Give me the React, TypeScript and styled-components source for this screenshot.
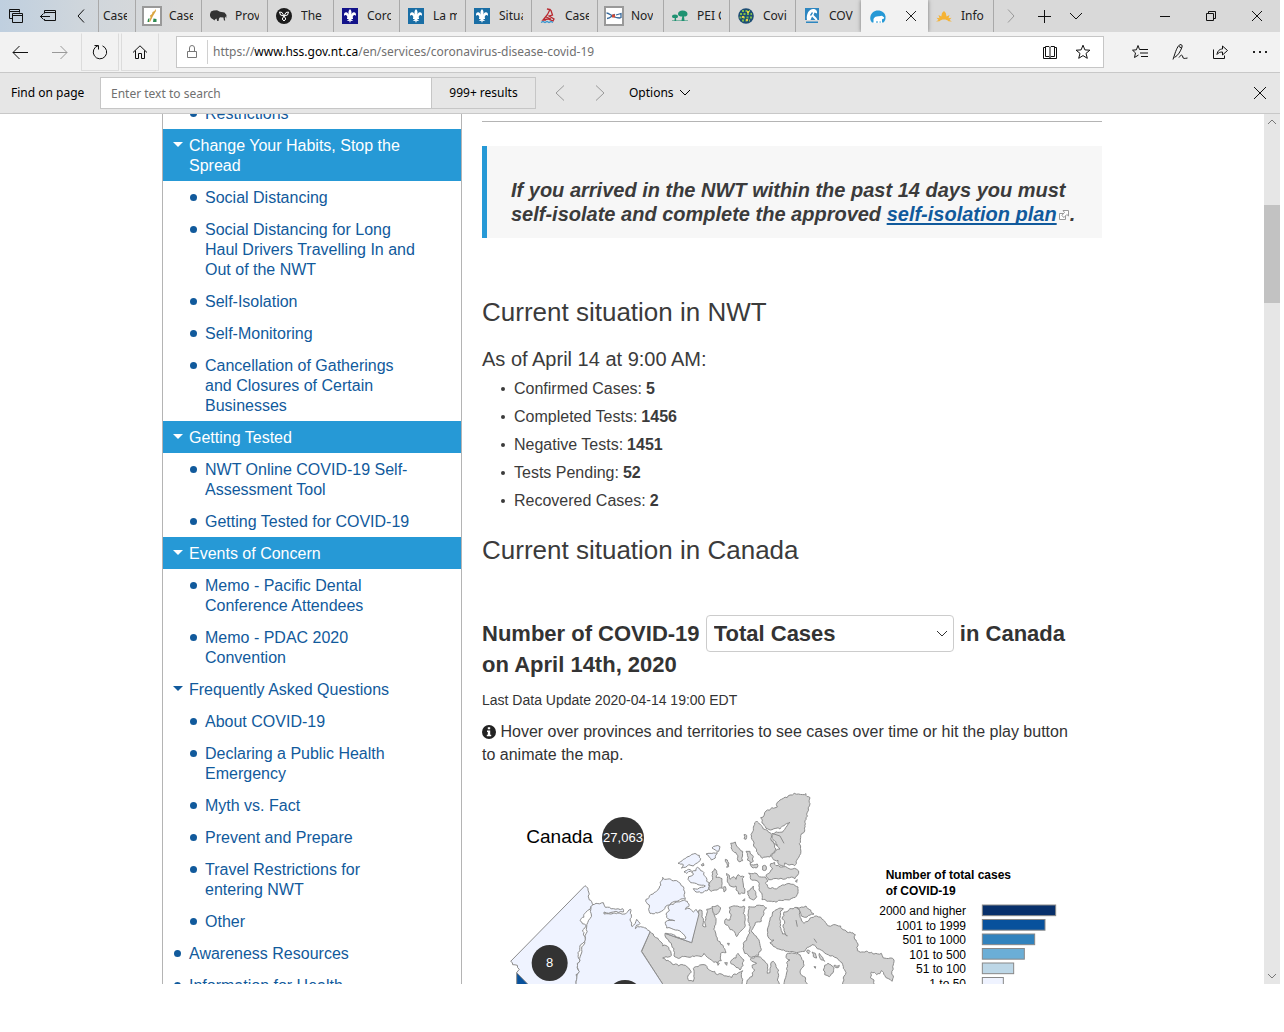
import React from "react";
import styled, { createGlobalStyle, css } from "styled-components";

const UI_FONT = `"Noto Sans", "Open Sans", sans-serif`;
const PAGE_FONT = `"Liberation Sans", Arial, sans-serif`;

const Global = createGlobalStyle`
  *, *::before, *::after { box-sizing: border-box; }
  html, body, #root { height: 100%; }
  body { margin: 0; background: #fff; font-family: ${PAGE_FONT}; }
  ul { list-style: none; margin: 0; padding: 0; }
`;

const Window = styled.div`
  height: 100%;
  padding: 0 4px 48px 0;
  display: flex;
  flex-direction: column;
  overflow: hidden;
`;

/* ---------- browser chrome ---------- */

const bareButton = css`
  border: 0;
  margin: 0;
  padding: 0;
  background: transparent;
  font: inherit;
  color: inherit;
`;

const TabStrip = styled.div`
  flex: none;
  height: 32px;
  display: flex;
  background: linear-gradient(90deg, #bfcfdf 0, #cfd6dc 80px, #d9d9d9 180px);
  font: 12px/16px ${UI_FONT};
  color: #222;
`;

const ChromeButton = styled.button<{ $w: number; $dim?: boolean }>`
  ${bareButton}
  flex: none;
  width: ${(p) => p.$w}px;
  display: flex;
  align-items: center;
  justify-content: center;
  color: ${(p) => (p.$dim ? "#999" : "#111")};
`;

const TabList = styled.div`
  display: flex;
  border-left: 1px solid #a9a9a9;
`;

const Tab = styled.button<{ $active?: boolean; $first?: boolean }>`
  ${bareButton}
  width: ${(p) => (p.$first ? 37 : p.$active ? 67 : 66)}px;
  padding: 0 8px 0 ${(p) => (p.$first ? 4 : 6)}px;
  display: flex;
  align-items: center;
  justify-content: ${(p) => (p.$active ? "space-between" : "flex-start")};
  gap: 7px;
  border-right: 1px solid #a9a9a9;
  background: ${(p) => (p.$active ? "#f2f2f2" : "transparent")};
  ${(p) => p.$active && "margin-left: -1px; padding: 0 9px; border-right: 0; box-shadow: 0 0 4px #777;"}
`;

const TabIcon = styled.span`
  flex: none;
  width: 20px;
  height: 20px;
  display: flex;
  align-items: center;
  justify-content: center;
`;

const TabTitle = styled.span`
  min-width: 0;
  overflow: hidden;
  white-space: nowrap;
`;

const Spacer = styled.div`
  flex: 1;
`;

const NavBar = styled.div`
  flex: none;
  height: 41px;
  display: flex;
  background: #f2f2f2;
  border-bottom: 1px solid #c8c8c8;
`;

const RaisedButton = styled(ChromeButton)`
  height: 38px;
  margin: 1px 1px 0;
  border: 1px solid #dcdcdc;
  border-top-color: #f2f2f2;
`;

const AddressBar = styled.div`
  flex: 1;
  min-width: 0;
  margin: 4px 16px;
  display: flex;
  align-items: center;
  border: 1px solid #c6c6c6;
  background: #fff;
  font: 12px/20px ${UI_FONT};
`;

const Lock = styled.span`
  width: 31px;
  height: 24px;
  display: flex;
  align-items: center;
  justify-content: center;
  border-right: 1px solid #d0d0d0;
  color: #777;
`;

const Url = styled.span`
  flex: 1;
  min-width: 0;
  padding-left: 5px;
  overflow: hidden;
  white-space: nowrap;
  color: #707070;
  b {
    font-weight: 400;
    color: #000;
  }
`;

const FindBar = styled.form`
  flex: none;
  height: 41px;
  display: flex;
  align-items: center;
  background: #e6e6e6;
  border-bottom: 1px solid #c8c8c8;
  font: 12px/20px ${UI_FONT};
  color: #000;
`;

const FindLabel = styled.label`
  width: 100px;
  padding-left: 11px;
  white-space: nowrap;
`;

const FindInput = styled.input`
  width: 332px;
  height: 32px;
  padding: 0 10px;
  border: 1px solid #c6c6c6;
  border-radius: 0;
  background: #fff;
  font: inherit;
  &::placeholder {
    color: #707070;
    opacity: 1;
  }
`;

const FindCount = styled.output`
  width: 104px;
  height: 32px;
  display: flex;
  align-items: center;
  justify-content: center;
  border: 1px solid #c6c6c6;
  border-left: 0;
  margin-right: 4px;
`;

const OptionsButton = styled.button`
  ${bareButton}
  display: flex;
  align-items: center;
  gap: 5px;
  margin-left: 9px;
`;

/* ---------- page ---------- */

const Viewport = styled.div`
  flex: 1;
  min-height: 0;
  display: flex;
`;

const Page = styled.div`
  flex: 1;
  min-width: 0;
  overflow: hidden;
`;

const Columns = styled.div`
  max-width: 940px;
  margin: 0 auto;
  display: flex;
  gap: 20px;
`;

const SideNav = styled.nav`
  flex: none;
  width: 300px;
  margin-top: -17px;
  border: 1px solid #b4b4b4;
  border-width: 0 1px;
  font-size: 16px;
  line-height: 20px;
`;

const NavItem = styled.li<{ $level: number; $on?: boolean }>`
  display: flex;
  padding: 7px 44px 5px ${(p) => (p.$level === 2 ? 26 : 10)}px;
  background: ${(p) => (p.$on ? "#2699d6" : "transparent")};
  color: ${(p) => (p.$on ? "#fff" : "#115a9c")};
`;

const Marker = styled.span`
  flex: none;
  width: 16px;
  height: 18px;
  display: flex;
  align-items: center;
`;

const Dot = styled.i`
  width: 7px;
  height: 7px;
  margin-left: 1px;
  border-radius: 50%;
  background: currentColor;
`;

const Caret = styled.i`
  border: 5px solid transparent;
  border-top-color: currentColor;
  border-bottom: 0;
  margin-bottom: 2px;
`;

const NavLink = styled.a`
  color: inherit;
  text-decoration: none;
`;

const Main = styled.main`
  flex: 1;
  min-width: 0;
  padding-top: 7px;
  color: #3b3b3b;
`;

const Rule = styled.hr`
  margin: 0 0 24px;
  border: 0;
  border-top: 1px solid #b4b4b4;
`;

const Notice = styled.blockquote`
  margin: 0 0 56px;
  padding: 32px 20px 12px 24px;
  border-left: 5px solid #2699d6;
  background: #f7f7f7;
  font: italic bold 20px/24px ${PAGE_FONT};
  a {
    color: #115a9c;
    text-decoration: underline 2px;
    text-underline-offset: 2px;
    text-decoration-skip-ink: none;
  }
  svg {
    margin: 0 1px 0 2px;
    vertical-align: 1px;
  }
`;

const H2 = styled.h2`
  margin: 0;
  font-size: 26px;
  line-height: 36px;
  font-weight: 400;
`;

const H3 = styled.h3`
  margin: 16px 0 0;
  font-size: 20px;
  line-height: 26px;
  font-weight: 400;
`;

const Stats = styled.ul`
  margin: 3px 0 17px;
  font-size: 16px;
  line-height: 28px;
`;

const Stat = styled.li`
  display: flex;
  align-items: center;
  gap: 4px;
  padding-left: 19px;
  &::before {
    content: "";
    width: 4px;
    height: 4px;
    margin-right: 5px;
    border-radius: 50%;
    background: #3b3b3b;
  }
`;

const MapTitle = styled.h4`
  margin: 50px 0 0;
  padding-right: 20px;
  font-size: 22px;
  line-height: 31px;
  font-weight: 700;
  color: #333;
`;

const SelectWrap = styled.span`
  position: relative;
  display: inline-block;
  margin: -3px 0;
  svg {
    position: absolute;
    right: 6px;
    top: 13px;
    pointer-events: none;
  }
`;

const CaseSelect = styled.select`
  width: 248px;
  height: 37px;
  padding: 0 7px;
  appearance: none;
  border: 1px solid #ccc;
  border-radius: 4px;
  background: #fff;
  color: #333;
  font: bold 22px/31px ${PAGE_FONT};
`;

const Updated = styled.p`
  margin: 10px 0;
  font-size: 14px;
  line-height: 20px;
  color: #333;
`;

const Hint = styled.p`
  margin: 0;
  padding-right: 20px;
  font-size: 16px;
  line-height: 23px;
  color: #333;
  svg {
    vertical-align: -2px;
  }
`;

const MapSvg = styled.svg`
  display: block;
  width: 100%;
  margin-top: 14px;
  font-family: ${PAGE_FONT};
`;

const ScrollBar = styled.div`
  flex: none;
  width: 16px;
  display: flex;
  flex-direction: column;
  align-items: center;
  background: #e6e6e6;
  color: #777;
`;

const Thumb = styled.div`
  width: 16px;
  height: 98px;
  margin-top: 75px;
  background: #c2c2c2;
`;

const ScrollArrow = styled.button`
  ${bareButton}
  height: 16px;
  display: flex;
  align-items: center;
`;

/* ---------- icons ---------- */

type LineProps = { d: string; size?: number; w?: number };
const Line = ({ d, size = 16, w = 1 }: LineProps) => (
  <svg width={size} height={size} viewBox={`0 0 ${size} ${size}`} fill="none" stroke="currentColor" strokeWidth={w} aria-hidden="true">
    <path d={d} />
  </svg>
);

const icons = {
  tabsAside: "M4.5 10.500h-3v-9h10v3M1.500 3.500h10M4.500 5.500h10v9h-10zM4.500 7.500h10",
  setAside: "M4.500 5.500V2.500h11v10h-11V11M4.500 4.500h11M0 8.500h10M3.500 5.500L.500 8.500l3 3",
  left: "M11 1.500L5 8l6 6.500",
  right: "M5 1.500L11 8l-6 6.500",
  prev: "M12 .500L4 8l8 7.500",
  next: "M4 .500L12 8l-8 7.500",
  down: "M2 5l6 6 6-6",
  plus: "M8.500 2v13M2 8.500h13",
  minimise: "M3 8.500h10",
  restore: "M3.500 5.500h7v7h-7zM5.500 5.500v-2h7v7h-2",
  close: "M3 3l10 10M13 3L3 13",
  back: "M1 8.500h15M7.500 2L1 8.500 7.500 15",
  forward: "M0 8.500h15M8.500 2L15 8.500 8.500 15",
  refresh: "M6 1.700A6.700 6.700 0 1 0 10.500 1.900M2.500 1.500H6.500V5.500",
  home: "M1 8.500L8 1.800l7 6.700M3.500 6.500v8h3v-5h3v5h3v-8",
  lock: "M3.500 7.500h9v6h-9zM5.500 7.500V4a2.500 2.500 0 0 1 5 0v3.500",
  book: "M8 3.500v10M8 3.500L7 2.500H3.500v10H7l1 1 1-1h3.500v-10H9zM3.500 3.500h-2v11h13v-11h-2",
  star: "M8 1.200l1.900 4.700 5 .300-3.900 3.200 1.300 4.900L8 11.600l-4.300 2.700L5 9.400 1.100 6.200l5-.300z",
  favourites: "M10 5.500H7.500L6 1.500 4.400 5.800.500 6.200l3 2.700-1 4.600L6.500 11M9 5.500h7M8 9h8M9 12.500h7",
  pen: "M1 15.500l1.500-4.500C4 6 6 1.500 8 .700c1.500-.500 2.500.600 2 2.300C8.500 7.500 6 11.500 2.500 13.500M7 2.500l2.500 1.500M7 13.500c2-3 3.500-3 3.800-.500.200 2 2 1.500 4.700 1",
  share: "M1.500 5.500v9h11v-3M5 10.500C5.500 6.500 8 5 10.500 5V2l5 4.500-5 4.500V8C8 8 6.500 8.500 5 10.500z",
};

const FleurDeLis = ({ bg }: { bg: string }) => (
  <svg width="16" height="16" viewBox="0 0 16 16" aria-hidden="true">
    <path fill={bg} d="M0 0h16v16H0z" />
    <path fill="#fff" d="M8 1c1.800 2 2 3.500.8 7 .8-3 2-4 3.400-3.700C14 4.700 14.500 6.500 13.500 8c-.3-1-1.200-1.300-2-.6-.7.700-.8 1.300-1 2.100H11v1.400H9.300c.3 1 1 1.500 2 1.600-1 .8-1.800.6-2.400 0L8 15l-.9-2.500c-.6.600-1.400.8-2.400 0 1-.1 1.700-.6 2-1.600H5V9.500h.5c-.2-.8-.3-1.400-1-2.100-.8-.7-1.700-.4-2 .6C1.500 6.500 2 4.700 3.800 4.300 5.200 4 6.400 5 7.200 8 6 4.500 6.200 3 8 1z" />
  </svg>
);

const Alberta = () => (
  <svg width="20" height="20" viewBox="0 0 20 20" aria-hidden="true">
    <path fill="#fff" stroke="#999" strokeWidth="2" d="M1 1h18v18H1z" />
    <path fill="#dba640" d="M13.500 3l.5 2-3 5-3 6-1-.5 1.500-4-.5-2 2-1.500.5-2 2-1z" />
    <path fill="#2f8a53" d="M6 13l1.500-1L7 16H5.500zM11.500 12.500l3 .5V16h-3.500z" />
  </svg>
);

const Bison = () => (
  <svg width="17" height="12" viewBox="0 0 17 12" aria-hidden="true">
    <path fill="#333" d="M0 4l1-2.500L3.500.500 7 .300l3 1.500 4.500.700L16.500 5l-.3 3.500-.7-2-.7 1.500.4 2.500h-1.200l-.6-3-3.400-.2-1 1.200L8.500 11H7.200L6.500 8.500 5 9.500l-.5 1-1.200-1L1 8 0 6z" />
  </svg>
);

const Trillium = () => (
  <svg width="16" height="16" viewBox="0 0 16 16" aria-hidden="true">
    <circle cx="8" cy="8" r="8" fill="#1c1c1c" />
    <path fill="none" stroke="#fff" d="M8 8L4.500 7 3.500 4 6 4.500 8 8l2-3.500 2.500-.5-1 3zM8 8l-1.800 3L8 13l1.800-2z" />
  </svg>
);

const Ship = () => (
  <svg width="16" height="16" viewBox="0 0 16 16" aria-hidden="true">
    <path fill="none" stroke="#b8292f" strokeWidth="1.300" d="M7 1l3 .5-2.500 5L3 12l5-1 5 2 1-2-5-3 3.500-1L11 2.500zM6 9l5 2M3 12h3" />
    <path fill="none" stroke="#3594cf" strokeWidth="1.300" d="M1 14.500l2-1 2 1 2-1 2 1 2-1 2 1" />
  </svg>
);

const NovaScotia = () => (
  <svg width="20" height="20" viewBox="0 0 20 20" aria-hidden="true">
    <path fill="#fff" stroke="#999" strokeWidth="2" d="M1 1h18v18H1z" />
    <path fill="none" stroke="#37699c" strokeWidth="1.300" d="M2.500 7c4 0 5 5 14 5M3 12.500c4 0 5-3.500 8-4M12 9l5-1.500V12" />
    <path fill="#d04a35" d="M8 8.500h3v3H8z" />
  </svg>
);

const PeiTrees = () => (
  <svg width="16" height="12" viewBox="0 0 16 12" aria-hidden="true">
    <path fill="#1f9271" d="M10.500.500c3 0 5 1.500 5 3.500s-1.500 2.500-3.500 2.500l.5 4h-3l.8-4C8 6.500 6 6 6 4S8 .500 10.500.500zM3 4.500c2 0 3 .8 3 2S5 8 4 8l.2 2.500H2.500L2.700 8C1 8 0 7.600 0 6.500s1-2 3-2zM0 10.500h16V11H0z" />
  </svg>
);

const Globe = () => (
  <svg width="16" height="16" viewBox="0 0 16 16" aria-hidden="true">
    <circle cx="8" cy="8" r="7.800" fill="#1d4d74" />
    <path fill="none" stroke="#7dbb4b" strokeWidth="2" strokeDasharray="2 1.500" d="M2 6h12M1.500 9.500h13M4 12.500h8M4 3h8" />
    <path fill="#e8c94a" d="M9 3h2v2H9zM4 8h2v2H4zM8 11h2v2H8z" />
  </svg>
);

const Wave = () => (
  <svg width="14" height="16" viewBox="0 0 14 16" aria-hidden="true">
    <path fill="#2d86c0" d="M0 0h14v12H0z" />
    <path fill="#fff" d="M2 12C1 6 4 1 8 1c3 0 4.500 2 4 4.500L9.500 4.500 8.500 7l3 3 1 2h-2L7 8.500 5.500 12z" />
    <path fill="#2d86c0" d="M5 7l2-3 1 1-2 3zM1 13.500h12V15H1z" />
  </svg>
);

const PolarBear = () => (
  <svg width="16" height="13" viewBox="0 0 16 13" aria-hidden="true">
    <path fill="#2699d6" d="M2 12.500C.500 11 0 9 .3 7 1 3 4 .500 8 .500s7 2.500 7.500 6c.3 2.500-.5 4.500-2 6z" />
    <path fill="#fff" d="M3.500 13V9C4.500 6.500 7 6 9 6.200l3-.4 2.200 1.700-.4 1.200-1.600.3-.2 1.500V13h-1.200v-1.500H9.500V13H8v-1.500H6V13H4.800" />
  </svg>
);

const Sun = () => (
  <svg width="16" height="12" viewBox="0 0 16 12" aria-hidden="true">
    <path fill="#f5b335" d="M0 11.500L2.500 10 .5 7.800l3 .4L2.500 5l2.800 1.500L6 3l2-2 1.800 2 .7 3.500L13.500 5l-1 3.200 3-.4L13.500 10l2.500 1.500-3.500-.2C11 8.800 5 8.800 3.500 11.300z" />
  </svg>
);

const External = () => (
  <svg width="10" height="10" viewBox="0 0 10 10" fill="#fff" stroke="#999" aria-hidden="true">
    <path d="M.5 3.500h6v6h-6z" />
    <path d="M4 .500h5.500V6L7.800 4.500 5 7.500 2.800 5.500 5.500 2.500z" />
  </svg>
);

const Info = () => (
  <svg width="14" height="14" viewBox="0 0 14 14" aria-hidden="true">
    <circle cx="7" cy="7" r="7" fill="#222" />
    <path fill="#fff" d="M5.800 2.200h2.400v2H5.800zM5 5.500h3.200v4.200H9.200v1.500H4.800V9.700h1V7H5z" />
  </svg>
);

/* ---------- map ---------- */

/* Turns key points into a ragged coastline. A point written with "=" is
   reached by a straight surveyed border instead. */
function coast(points: string, rough = 0.22): string {
  const pts = points.trim().split(/\s+/).map((t) => {
    const straight = t[0] === "=";
    const [x, y] = t.replace("=", "").split(",").map(Number);
    return { x, y, straight };
  });
  const out: string[] = [`M${pts[0].x} ${pts[0].y}`];
  const walk = (ax: number, ay: number, bx: number, by: number) => {
    const len = Math.hypot(bx - ax, by - ay);
    if (len < 8) {
      out.push(`L${bx.toFixed(1)} ${by.toFixed(1)}`);
      return;
    }
    const seed = Math.sin(ax * 12.9 + ay * 78.2 + bx * 3.7 + by * 9.1) * 43758.5;
    const k = (seed - Math.floor(seed) - 0.5) * 2 * Math.min(len * rough, 4);
    const mx = (ax + bx) / 2 - ((by - ay) / len) * k;
    const my = (ay + by) / 2 + ((bx - ax) / len) * k;
    walk(ax, ay, mx, my);
    walk(mx, my, bx, by);
  };
  for (let i = 1; i <= pts.length; i++) {
    const a = pts[i - 1];
    const b = pts[i % pts.length];
    if (b.straight) out.push(`L${b.x} ${b.y}`);
    else walk(a.x, a.y, b.x, b.y);
  }
  return out.join("") + "Z";
}

const GREY = "#d3d3d3";
const PALE = "#eff3ff";

type Land = { fill: string; at?: [number, number]; pts: string };

const lands: Land[] = [
  /* mainland Nunavut */
  { fill: GREY, at: [450, 180], pts: "60,275 76,292 98,318 116,322 122,334 124,346 108,350 98,354 108,362 126,372 146,378 166,376 176,384 184,396 176,404 176,422 190,424 192,404 190,386 204,380 216,374 228,376 238,390 254,394 262,404 290,408 306,412 312,402 326,398 338,392 334,404 338,418 336,432 =336,460 =98,460 =98,432 =35,334 =60,275" },
  { fill: GREY, at: [630, 0], pts: "172,630 172,600 186,590 194,570 186,556 200,550 180,538 204,530 216,536 228,548 234,570 232,580 240,578 242,552 250,544 258,560 266,570 266,586 262,600 268,612 =268,630" },
  { fill: GREY, at: [630, 0], pts: "286,630 284,600 292,572 290,548 300,540 288,532 292,520 324,520 334,532 342,556 334,566 330,576 346,592 352,612 =352,630" },
  /* Victoria Island */
  { fill: GREY, at: [450, 180], pts: "105,280 =185,308 =207,210 216,212 220,236 218,258 228,260 230,222 230,208 244,204 256,214 252,224 258,240 256,276 262,300 284,326 288,338 272,340 274,362 262,368 244,360 232,352 222,340 214,350 180,352 150,354 132,348 132,326 118,306" },
  { fill: PALE, at: [450, 180], pts: "118,196 140,186 172,184 176,200 166,208 180,206 190,216 198,208 =207,222 =185,308 =105,280 130,284 168,294 160,282 136,270 110,264 106,246 134,242 110,232 108,222 118,212" },
  { fill: PALE, at: [450, 180], pts: "98,112 104,118 140,122 160,140 166,178 148,181 134,184 112,196 94,214 60,220 58,195 48,178 62,164 88,144" },
  /* northwestern islands */
  { fill: PALE, at: [450, 180], pts: "144,70 160,58 174,50 190,42 208,46 212,56 206,66 190,78 176,74 166,82 154,84 160,74" },
  { fill: PALE, at: [450, 180], pts: "176,110 190,104 184,96 198,92 202,82 212,92 222,98 228,112 230,124 238,128 234,150 218,158 198,156 190,146 214,142 226,138 204,134 182,128 174,118" },
  { fill: PALE, at: [450, 180], pts: "162,96 176,88 184,92 170,100" },
  { fill: PALE, at: [450, 180], pts: "228,42 240,40 262,38 256,54 244,60 238,52" },
  { fill: PALE, at: [450, 180], pts: "246,24 256,18 270,20 266,34 256,30" },
  { fill: GREY, at: [450, 180], pts: "214,74 220,70 222,76 216,78" },
  { fill: GREY, at: [450, 180], pts: "242,124 248,118 246,96 254,86 260,94 258,112 276,116 276,144 262,150 244,154 236,144" },
  { fill: GREY, at: [630, 0], pts: "98,324 106,320 108,330 102,336" },
  { fill: GREY, at: [630, 0], pts: "106,238 112,240 116,260 110,262" },
  { fill: GREY, at: [630, 0], pts: "122,190 136,186 140,198 150,208 158,214 158,242 150,246 142,236 138,218 126,208" },
  { fill: GREY, at: [630, 0], pts: "168,214 180,214 190,230 190,244 182,250 172,240" },
  { fill: GREY, at: [630, 0], pts: "180,250 202,252 202,262 186,262" },
  { fill: GREY, at: [630, 0], pts: "162,164 170,166 168,178 162,176" },
  { fill: GREY, at: [630, 0], pts: "218,258 228,258 228,270 218,270" },
  { fill: GREY, at: [630, 0], pts: "110,280 118,286 120,298 132,290 138,298 144,284 162,290 164,340 146,342 138,330 138,318 126,320 116,310 112,300" },
  { fill: GREY, at: [630, 0], pts: "172,334 182,326 190,318 196,334 200,350 190,360 178,354" },
  { fill: GREY, at: [630, 0], pts: "158,362 164,356 164,362" },
  { fill: GREY, at: [630, 0], pts: "112,490 118,490 116,496" },
  { fill: GREY, at: [630, 0], pts: "80,548 88,550 84,556" },
  { fill: GREY, at: [630, 0], pts: "104,548 112,548 110,556" },
  /* Ellesmere and Axel Heiberg */
  { fill: GREY, at: [810, 15], pts: "32,98 48,78 66,68 82,66 82,52 100,40 120,30 146,27 168,26 180,38 180,56 172,82 168,104 164,138 152,158 148,176 152,206 140,226 134,242 112,238 104,234 100,244 88,240 84,226 68,220 66,208 78,196 90,192 78,176 66,160 70,146 88,142 104,134 120,112 102,122 90,132 66,134 48,130 36,114" },
  { fill: GREY, at: [810, 15], pts: "20,108 32,120 40,132 62,144 62,160 74,180 78,192 68,204 60,216 36,220 24,208 18,190 10,180 4,158 8,140 12,122" },
  { fill: GREY, at: [810, 15], pts: "62,236 74,232 78,242 90,246 112,248 134,250 146,258 142,272 134,282 112,278 86,282 56,284 48,274 60,262 68,252" },
  { fill: GREY, at: [810, 15], pts: "-4,264 14,264 24,272 46,276 54,288 46,294 54,308 80,312 104,300 130,298 144,306 144,324 130,338 104,344 68,350 36,344 30,320 28,296 18,286 2,282" },
  { fill: GREY, at: [810, 15], pts: "136,288 142,284 140,292" },
  /* Prince of Wales, Somerset, Boothia */
  { fill: GREY, at: [630, 0], pts: "118,382 136,378 162,378 160,400 164,426 160,446 146,460 140,470 130,452 116,440 104,426 108,416 120,420 124,404 118,396" },
  { fill: GREY, at: [630, 0], pts: "66,380 82,376 92,384 86,398 76,404 68,392" },
  { fill: GREY, at: [630, 0], pts: "176,380 200,376 230,384 222,400 214,424 196,428 184,452 194,466 208,484 214,508 206,526 184,532 164,520 160,490 174,468 178,430" },
  { fill: GREY, at: [630, 0], pts: "122,544 138,534 144,520 152,530 162,540 160,556 150,570 138,562 124,552" },
  /* Baffin Island */
  { fill: GREY, at: [630, 0], pts: "280,386 262,388 248,396 240,420 232,450 238,476 252,480 240,488 252,500 270,508 292,514 320,518 344,514 352,502 366,494 378,500 400,514 420,528 446,540 460,560 468,578 462,600 458,630 =556,630 552,600 540,592 544,576 560,584 574,572 584,586 606,604 610,588 608,560 612,540 600,534 580,534 574,520 552,522 520,516 502,512 504,492 494,478 496,464 480,456 464,450 452,438 430,434 412,436 400,420 380,408 370,412 354,424 342,430 334,420 328,404 330,390 318,382 300,386 282,396 276,416 284,430 282,452 292,468 278,462 270,440 270,420 272,402" },
  { fill: GREY, at: [630, 0], pts: "320,382 348,378 362,390 372,402 356,406 344,412 334,408 330,394" },
  { fill: GREY, at: [630, 0], pts: "404,556 414,550 430,560 430,576 418,590 404,584 400,570" },
  { fill: GREY, at: [630, 0], pts: "352,510 360,514 356,522 350,516" },
  { fill: GREY, at: [630, 0], pts: "366,516 376,520 380,534 370,530" },
  { fill: GREY, at: [630, 0], pts: "388,520 398,532 404,544 394,540" },
  { fill: GREY, at: [630, 0], pts: "432,556 448,556 446,562 436,562" },
  { fill: GREY, at: [630, 0], pts: "372,560 377,560 376,565" },
  /* NWT mainland, Yukon, British Columbia */
  { fill: PALE, pts: "338,374 348,370 370,368 376,382 400,386 428,386 430,396 400,396 372,396 372,402 400,400 436,402 452,388 454,404 450,420 456,440 470,418 480,430 466,446 482,440 498,444 510,456 =484,514 =548,612 =548,640 =282,640 =290,590" },
  { fill: PALE, pts: "=315,317 326,336 328,360 338,374 300,422 318,436 308,450 314,484 302,494 300,512 294,518 300,540 292,550 298,574 288,584 288,612 =286,640 =170,640 =110,578 118,568 112,556 98,554 92,544 =315,317" },
];

/* fjords cut into the high Arctic islands */
const fjords = "M872 180L886 192 894 196M876 160L900 168 912 190M948 420L952 440M1002 476L1010 488";

const westCoast = "M110 578V640H180L150 612Z";

const badges = [
  { x: 429, y: 174, r: 63, label: "27,063" },
  { x: 209, y: 549, r: 54, label: "8" },
  { x: 435, y: 654, r: 54, label: "5" },
];

const legend = [
  { label: "2000 and higher", w: 222, fill: "#08306b" },
  { label: "1001 to 1999", w: 190, fill: "#08519c" },
  { label: "501 to 1000", w: 159, fill: "#3182bd" },
  { label: "101 to 500", w: 128, fill: "#6baed6" },
  { label: "51 to 100", w: 96, fill: "#bdd7e7" },
  { label: "1 to 50", w: 65, fill: "#eff3ff" },
];

const CanadaMap = () => (
  <MapSvg viewBox="6 0 1860 1500" role="img" aria-label="Map of COVID-19 cases in Canada">
    <g stroke="#8c8c8c" strokeWidth="3" strokeLinejoin="round">
      <path d={westCoast} fill="#08519c" />
      {lands.map((l, i) => (
        <path key={i} fill={l.fill} d={coast(l.pts)} transform={l.at && `translate(${l.at[0]} ${l.at[1]})`} />
      ))}
      <path fill="none" d={fjords} />
    </g>
    <text x="139" y="189" fontSize="57">Canada</text>
    {badges.map((b) => (
      <g key={b.label}>
        <circle cx={b.x} cy={b.y} r={b.r} fill="#333" />
        <text x={b.x} y={b.y + 13} fontSize="39" fill="#fff" textAnchor="middle">{b.label}</text>
      </g>
    ))}
    <g fontSize="36" fontWeight="700">
      <text x="1217" y="297">Number of total cases</text>
      <text x="1217" y="345">of COVID-19</text>
    </g>
    {legend.map((row, i) => (
      <g key={row.label}>
        <text x="1458" y={405 + i * 43.5} fontSize="36" textAnchor="end">{row.label}</text>
        <rect x="1507" y={375 + i * 43.5} width={row.w - 2} height="32" fill={row.fill} stroke="#888" strokeWidth="3" />
      </g>
    ))}
  </MapSvg>
);

/* ---------- data ---------- */

const tabs = [
  { title: "Case", icon: <Alberta /> },
  { title: "Prov", icon: <Bison /> },
  { title: "The", icon: <Trillium /> },
  { title: "Coro", icon: <FleurDeLis bg="#13138a" /> },
  { title: "La m", icon: <FleurDeLis bg="#1a6ea5" /> },
  { title: "Situa", icon: <FleurDeLis bg="#1a6ea5" /> },
  { title: "Case", icon: <Ship /> },
  { title: "Nov", icon: <NovaScotia /> },
  { title: "PEI C", icon: <PeiTrees /> },
  { title: "Covi", icon: <Globe /> },
  { title: "COV", icon: <Wave /> },
];

type Item = { level: 1 | 2; text: string; on?: boolean; open?: boolean };
const menu: Item[] = [
  { level: 2, text: "Restrictions" },
  { level: 1, text: "Change Your Habits, Stop the Spread", on: true, open: true },
  { level: 2, text: "Social Distancing" },
  { level: 2, text: "Social Distancing for Long Haul Drivers Travelling In and Out of the NWT" },
  { level: 2, text: "Self-Isolation" },
  { level: 2, text: "Self-Monitoring" },
  { level: 2, text: "Cancellation of Gatherings and Closures of Certain Businesses" },
  { level: 1, text: "Getting Tested", on: true, open: true },
  { level: 2, text: "NWT Online COVID-19 Self-Assessment Tool" },
  { level: 2, text: "Getting Tested for COVID-19" },
  { level: 1, text: "Events of Concern", on: true, open: true },
  { level: 2, text: "Memo - Pacific Dental Conference Attendees" },
  { level: 2, text: "Memo - PDAC 2020 Convention" },
  { level: 1, text: "Frequently Asked Questions", open: true },
  { level: 2, text: "About COVID-19" },
  { level: 2, text: "Declaring a Public Health Emergency" },
  { level: 2, text: "Myth vs. Fact" },
  { level: 2, text: "Prevent and Prepare" },
  { level: 2, text: "Travel Restrictions for entering NWT" },
  { level: 2, text: "Other" },
  { level: 1, text: "Awareness Resources" },
  { level: 1, text: "Information for Health" },
];

const stats = [
  ["Confirmed Cases:", "5"],
  ["Completed Tests:", "1456"],
  ["Negative Tests:", "1451"],
  ["Tests Pending:", "52"],
  ["Recovered Cases:", "2"],
];

export default function App() {
  return (
    <Window>
      <Global />
      <TabStrip>
        <ChromeButton $w={32} aria-label="Tabs set aside"><Line d={icons.tabsAside} /></ChromeButton>
        <ChromeButton $w={32} aria-label="Set tabs aside"><Line d={icons.setAside} /></ChromeButton>
        <ChromeButton $w={34} aria-label="Scroll tabs left"><Line d={icons.left} /></ChromeButton>
        <TabList>
          <Tab $first><TabTitle>Case</TabTitle></Tab>
          {tabs.map((t, i) => (
            <Tab key={i}>
              <TabIcon>{t.icon}</TabIcon>
              <TabTitle>{t.title}</TabTitle>
            </Tab>
          ))}
          <Tab $active aria-label="Current tab">
            <PolarBear />
            <Line d={icons.close} />
          </Tab>
          <Tab>
            <TabIcon><Sun /></TabIcon>
            <TabTitle>Info</TabTitle>
          </Tab>
        </TabList>
        <ChromeButton $w={34} $dim aria-label="Scroll tabs right"><Line d={icons.right} /></ChromeButton>
        <ChromeButton $w={32} aria-label="New tab"><Line d={icons.plus} /></ChromeButton>
        <ChromeButton $w={32} aria-label="Tab previews"><Line d={icons.down} /></ChromeButton>
        <Spacer />
        <ChromeButton $w={46} aria-label="Minimise"><Line d={icons.minimise} /></ChromeButton>
        <ChromeButton $w={46} aria-label="Restore"><Line d={icons.restore} /></ChromeButton>
        <ChromeButton $w={46} aria-label="Close window"><Line d={icons.close} /></ChromeButton>
      </TabStrip>

      <NavBar>
        <ChromeButton $w={40} aria-label="Back"><Line d={icons.back} /></ChromeButton>
        <ChromeButton $w={40} $dim aria-label="Forward"><Line d={icons.forward} /></ChromeButton>
        <RaisedButton $w={38} aria-label="Refresh"><Line d={icons.refresh} /></RaisedButton>
        <RaisedButton $w={38} aria-label="Home"><Line d={icons.home} /></RaisedButton>
        <AddressBar>
          <Lock><Line d={icons.lock} /></Lock>
          <Url>https://<b>www.hss.gov.nt.ca</b>/en/services/coronavirus-disease-covid-19</Url>
          <ChromeButton $w={26} aria-label="Reading view"><Line d={icons.book} /></ChromeButton>
          <ChromeButton $w={40} aria-label="Add to favourites"><Line d={icons.star} /></ChromeButton>
        </AddressBar>
        <ChromeButton $w={40} aria-label="Favourites"><Line d={icons.favourites} /></ChromeButton>
        <ChromeButton $w={40} aria-label="Add notes"><Line d={icons.pen} /></ChromeButton>
        <ChromeButton $w={40} aria-label="Share"><Line d={icons.share} /></ChromeButton>
        <ChromeButton $w={40} aria-label="More">
          <svg width="16" height="16" viewBox="0 0 16 16" aria-hidden="true">
            <path d="M1 7h2v2H1zM7 7h2v2H7zM13 7h2v2h-2z" fill="#222" />
          </svg>
        </ChromeButton>
      </NavBar>

      <FindBar>
        <FindLabel htmlFor="find">Find on page</FindLabel>
        <FindInput id="find" placeholder="Enter text to search" />
        <FindCount htmlFor="find">999+ results</FindCount>
        <ChromeButton type="button" $w={40} $dim aria-label="Previous result"><Line d={icons.prev} /></ChromeButton>
        <ChromeButton type="button" $w={40} $dim aria-label="Next result"><Line d={icons.next} /></ChromeButton>
        <OptionsButton type="button">Options <Line size={12} d="M1 3l5 5 5-5" /></OptionsButton>
        <Spacer />
        <ChromeButton type="button" $w={40} aria-label="Close find bar"><Line d="M2 2l12 12M14 2L2 14" /></ChromeButton>
      </FindBar>

      <Viewport>
        <Page>
          <Columns>
            <SideNav>
              <ul>
                {menu.map((m) => (
                  <NavItem key={m.text} $level={m.level} $on={m.on}>
                    <Marker>{m.open ? <Caret /> : <Dot />}</Marker>
                    <NavLink href="#">{m.text}</NavLink>
                  </NavItem>
                ))}
              </ul>
            </SideNav>
            <Main>
              <Rule />
              <Notice>
                If you arrived in the NWT within the past 14 days you must self-isolate and complete the approved{" "}
                <a href="#">self-isolation plan</a><External />.
              </Notice>
              <H2>Current situation in NWT</H2>
              <H3>As of April 14 at 9:00 AM:</H3>
              <Stats>
                {stats.map(([k, v]) => (
                  <Stat key={k}>{k} <strong>{v}</strong></Stat>
                ))}
              </Stats>
              <H2>Current situation in Canada</H2>
              <MapTitle>
                <label htmlFor="measure">Number of COVID-19</label>{" "}
                <SelectWrap>
                  <CaseSelect id="measure" defaultValue="total">
                    <option value="total">Total Cases</option>
                  </CaseSelect>
                  <Line size={12} d="M1 3l5 5 5-5" />
                </SelectWrap>{" "}
                in Canada on April 14th, 2020
              </MapTitle>
              <Updated>Last Data Update 2020-04-14 19:00 EDT</Updated>
              <Hint>
                <Info /> Hover over provinces and territories to see cases over time or hit the play button to animate the map.
              </Hint>
              <CanadaMap />
            </Main>
          </Columns>
        </Page>
        <ScrollBar>
          <ScrollArrow aria-label="Scroll up"><Line size={10} d="M1 7l4-4 4 4" /></ScrollArrow>
          <Thumb />
          <Spacer />
          <ScrollArrow aria-label="Scroll down"><Line size={10} d="M1 3l4 4 4-4" /></ScrollArrow>
        </ScrollBar>
      </Viewport>
    </Window>
  );
}
